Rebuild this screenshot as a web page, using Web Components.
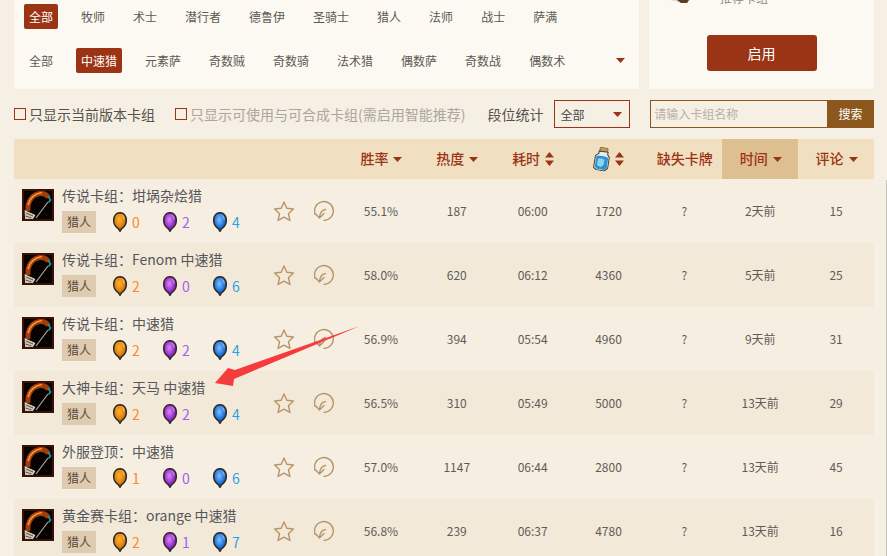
<!DOCTYPE html>
<html lang="zh">
<head>
<meta charset="utf-8">
<title>卡组</title>
<style>
    html, body { margin: 0; height: 556px; overflow: hidden; background: #f6efe3; }
    body { font-family: "Noto Sans CJK SC", "Liberation Sans", sans-serif; position: relative; }
</style>
</head>
<body>
<deck-page></deck-page>

<script>
const CARET = `<svg width="9" height="5" viewBox="0 0 9 5"><path d="M0 0h9L4.5 5z" fill="#9b3415"/></svg>`;
const SORT = `<svg width="9" height="14" viewBox="0 0 9 14"><path d="M4.5 0L9 5.500H0zM0 8.500h9L4.500 14z" fill="#9b3415"/></svg>`;

// Вкладки-фильтры: первая строка классы, вторая архетипы
class FilterTabs extends HTMLElement {
    connectedCallback() {
        const items = this.getAttribute('items').split(',');
        const active = this.getAttribute('active');
        const more = this.hasAttribute('more');
        const root = this.attachShadow({ mode: 'open' });
        root.innerHTML = `
            <style>
                :host { display: flex; align-items: center; height: 25px; position: relative; }
                span {
                    font-size: 12px;
                    line-height: 25px;
                    height: 25px;
                    padding: 0 5px;
                    margin-right: 18px;
                    color: #5c5954;
                    border-radius: 2px;
                    white-space: nowrap;
                }
                span.on { background: #9b3415; color: #fff; }
                svg { margin-left: auto; margin-right: 14px; }
            </style>
            ${items.map(t => `<span class="${t === active ? 'on' : ''}">${t}</span>`).join('')}
            ${more ? CARET : ''}
        `;
    }
}

class TopPanels extends HTMLElement {
    connectedCallback() {
        const root = this.attachShadow({ mode: 'open' });
        root.innerHTML = `
            <style>
                :host { display: flex; gap: 10px; height: 89px; margin: 0 13px 0 14px; }
                .filters {
                    width: 625px;
                    background: #fcf9f2;
                    padding: 4px 0 0 10px;
                    box-sizing: border-box;
                    display: flex;
                    flex-direction: column;
                    gap: 19px;
                }
                .side {
                    flex: 1;
                    background: #fcf9f2;
                    display: flex;
                    flex-direction: column;
                    align-items: center;
                    overflow: hidden;
                }
                .rec { align-self: flex-start; display: flex; height: 35px; font-size: 12px; color: #8d8a84; }
                .rec b { font-weight: 400; margin: -11px 0 0 71px; line-height: 18px; }
                .rec svg { position: absolute; left: 670px; top: 0; }
                button {
                    width: 110px;
                    height: 36px;
                    border: 0;
                    border-radius: 3px;
                    background: #9b3415;
                    color: #fff;
                    font: 14px "Noto Sans CJK SC", sans-serif;
                    padding: 0;
                }
            </style>
            <div class="filters">
                <filter-tabs items="全部,牧师,术士,潜行者,德鲁伊,圣骑士,猎人,法师,战士,萨满" active="全部"></filter-tabs>
                <filter-tabs more items="全部,中速猎,元素萨,奇数贼,奇数骑,法术猎,偶数萨,奇数战,偶数术" active="中速猎"></filter-tabs>
            </div>
            <div class="side">
                <div class="rec">
                    <svg width="20" height="4" viewBox="0 0 20 4"><path d="M0 0h20l-3 3h-5z" fill="#e5dccb"/><path d="M7 0h12l-2 3h-6z" fill="#5b3a24"/></svg>
                    <b>推荐卡组</b>
                </div>
                <button>启用</button>
            </div>
        `;
    }
}

class SearchBar extends HTMLElement {
    connectedCallback() {
        const root = this.attachShadow({ mode: 'open' });
        root.innerHTML = `
            <style>
                :host { display: flex; align-items: center; height: 28px; margin: 11px 13px 11px 14px; font-size: 14px; color: #55524d; }
                .check { display: flex; align-items: center; white-space: nowrap; }
                .check i { width: 10px; height: 10px; border: 1px solid #9b3415; margin-right: 3px; }
                .check.off { color: #aaa6a0; margin-left: 20px; }
                .rank { margin-left: 22px; white-space: nowrap; }
                .select {
                    width: 76px; height: 28px; margin-left: 11px; box-sizing: border-box;
                    border: 1px solid #9b3415; display: flex; align-items: center; justify-content: space-between;
                    padding: 0 7px 0 5px; font-size: 12px; color: #4a4744;
                }
                .search { margin-left: 20px; width: 224px; height: 28px; display: flex; box-sizing: border-box; }
                .search div {
                    flex: 1; border: 1px solid #8b571d; border-right: 0; font-size: 12px; color: #b5b1aa;
                    padding-left: 3px; line-height: 26px;
                }
                .search span { width: 47px; background: #8b571d; color: #fff; font-size: 12px; line-height: 28px; text-align: center; }
            </style>
            <label class="check"><i></i>只显示当前版本卡组</label>
            <label class="check off"><i></i>只显示可使用与可合成卡组(需启用智能推荐)</label>
            <span class="rank">段位统计</span>
            <div class="select">全部 ${CARET}</div>
            <div class="search"><div>请输入卡组名称</div><span>搜索</span></div>
        `;
    }
}

class DeckHead extends HTMLElement {
    connectedCallback() {
        const root = this.attachShadow({ mode: 'open' });
        const bottle = `<svg class="bottle" width="16" height="24" viewBox="0 0 16 24">
            <rect x="4.500" y="0.500" width="8" height="4" rx="1" fill="#c79a55" stroke="#6d5433" stroke-width=".7"/>
            <path d="M4 4.500h9v2.500l2 2.500v11l-3 3H4l-3-2V9.500l3-2.500z" fill="#e3ecee" stroke="#3c3c3a" stroke-width="1"/>
            <path d="M2 10c3-1.500 8-1.500 12 0v10.500l-2 2H4.500L2 20.500z" fill="#2f93cf"/>
            <path d="M4 12.500c2-1 5-1 6.500 0v5l-2.500 2.500-4-1z" fill="#8ad6f2"/>
        </svg>`;
        const col = (label, icon, on) => `<div class="${on ? 'on' : ''}"><span>${label}</span>${icon}</div>`;
        root.innerHTML = `
            <style>
                :host {
                    display: grid;
                    grid-template-columns: 329px repeat(7, 1fr);
                    height: 40px;
                    margin: 0 13px 0 14px;
                    background: #f0e0c1;
                    font-size: 14px;
                    font-weight: 500;
                    color: #9b3415;
                }
                div { display: flex; align-items: center; justify-content: center; gap: 5px; white-space: nowrap; padding-left: 1px; }
                span { display: block; margin-top: -2px; }
                .bottle { display: block; transform: rotate(9deg); margin-top: 2px; }
                .on { background: #debf90; }
            </style>
            <div></div>
            ${col('胜率', CARET)}
            ${col('热度', CARET)}
            ${col('耗时', SORT)}
            ${col(bottle, SORT)}
            ${col('缺失卡牌', '')}
            ${col('时间', CARET, true)}
            ${col('评论', CARET)}
        `;
    }
}

let gemSeq = 0;

// Кристалл редкости: цвет передаём снаружи
function gem(light, mid, dark) {
    const id = 'g' + (gemSeq++);
    return `<svg width="14" height="20" viewBox="0 0 14 20">
        <defs><radialGradient id="${id}" cx="45%" cy="38%" r="65%">
            <stop offset="0" stop-color="${light}"/><stop offset=".6" stop-color="${mid}"/><stop offset="1" stop-color="${dark}"/>
        </radialGradient></defs>
        <path d="M7 .7C3 .7.700 4 .700 8.500c0 3.800 2.800 7 4.800 8.300L7 19.300l1.500-2.500c2-1.300 4.800-4.500 4.800-8.300C13.300 4 11 .7 7 .7z" fill="url(#${id})" stroke="#2e2b26" stroke-width="1.500"/>
        <path d="M8.500 3c1.700.9 2.700 2.600 2.700 4.800" fill="none" stroke="#fff" stroke-opacity=".55" stroke-width="1"/>
    </svg>`;
}

class DeckRow extends HTMLElement {
    connectedCallback() {
        const d = this.dataset;
        const root = this.attachShadow({ mode: 'open' });
        const stats = [d.rate, d.hot, d.time, d.dust, '?', d.ago, d.comments];
        root.innerHTML = `
            <style>
                :host {
                    display: grid;
                    grid-template-columns: 329px repeat(7, 1fr);
                    height: 64px;
                    margin: 0 13px 0 14px;
                    background: ${d.alt ? '#f3e9d8' : '#f6eee0'};
                    font-size: 12px;
                    color: #5f5c58;
                }
                .stat { display: flex; align-items: center; justify-content: center; padding-bottom: 2px; }
                .main { display: flex; padding: 10px 0 0 8px; position: relative; }
                .hero { width: 32px; height: 32px; flex: none; }
                .info { margin-left: 8px; width: 212px; }
                .name { font-size: 14px; line-height: 20px; height: 20px; margin-top: -4px; color: #55565c; white-space: nowrap; }
                .meta { display: flex; align-items: center; margin-top: 6px; height: 22px; }
                .tag { width: 34px; height: 22px; line-height: 22px; text-align: center; background: #decbb0; color: #5a4a38; margin-right: 17px; }
                .cost { display: flex; align-items: center; width: 50px; font-size: 14px; }
                .cost svg { margin-right: 5px; flex: none; }
                .orange { color: #f98a2c; } .purple { color: #a55cf2; } .blue { color: #2f9fe8; }
                .tools { display: flex; gap: 20px; margin-top: 11px; height: 22px; }
            </style>
            <div class="main">
                <svg class="hero" viewBox="0 0 32 32">
                    <rect width="32" height="32" fill="#3a1208"/>
                    <rect x="2" y="2" width="28" height="28" fill="#060302"/>
                    <path d="M6 22C5 12 11 4.500 19 4.500c4 0 6 1.500 7.500 4" fill="none" stroke="#a63c0c" stroke-width="5"/>
                    <path d="M6 16C8 9 13 4.500 20 3.500" fill="none" stroke="#f0a23a" stroke-width="1.500"/>
                    <path d="M26 7l2.500 4-2 2.500" fill="none" stroke="#2f8f90" stroke-width="1.800"/>
                    <path d="M26 13L14 29" stroke="#a8a89a" stroke-width="1.200"/>
                    <path d="M2.500 21l11 5-2.500 4H3z" fill="#cfcab3"/>
                    <path d="M4 24l7 3M3.500 27l6 2" stroke="#5a5040" stroke-width="1"/>
                </svg>
                <div class="info">
                    <div class="name">${d.name}</div>
                    <div class="meta">
                        <span class="tag">猎人</span>
                        <span class="cost orange">${gem('#ffb52e', '#e07f0a', '#8a4504')}${d.o}</span>
                        <span class="cost purple">${gem('#d98bf2', '#9b2cd0', '#54127a')}${d.p}</span>
                        <span class="cost blue">${gem('#7fc2fa', '#1f72dc', '#0c3d8c')}${d.b}</span>
                    </div>
                </div>
                <div class="tools">
                    <svg width="20" height="22" viewBox="0 0 20 22"><path d="M10 2l2.800 6.300 6.700.7-5 4.600 1.400 6.700L10 17.100l-5.900 3.200 1.400-6.700-5-4.600 6.700-.7z" fill="none" stroke="#b8946c" stroke-width="1.400" stroke-linejoin="round"/></svg>
                    <svg width="20" height="22" viewBox="0 0 20 22"><path d="M1.200 14.500A9.400 9.400 0 1 1 10 20.400" fill="none" stroke="#b8946c" stroke-width="1.400" stroke-linecap="round"/><path d="M11.500 9.500C8 10 5.800 13 5.500 18M1.800 14L5.500 18l4.500-4.500" fill="none" stroke="#b8946c" stroke-width="1.400" stroke-linecap="round" stroke-linejoin="round"/></svg>
                </div>
            </div>
            ${stats.map(s => `<div class="stat">${s}</div>`).join('')}
        `;
    }
}

class DeckPage extends HTMLElement {
    connectedCallback() {
        const rows = [
            ['传说卡组：坩埚杂烩猎', 0, 2, 4, '55.1%', 187, '06:00', 1720, '2天前', 15],
            ['传说卡组：Fenom 中速猎', 2, 0, 6, '58.0%', 620, '06:12', 4360, '5天前', 25],
            ['传说卡组：中速猎', 2, 2, 4, '56.9%', 394, '05:54', 4960, '9天前', 31],
            ['大神卡组：天马 中速猎', 2, 2, 4, '56.5%', 310, '05:49', 5000, '13天前', 29],
            ['外服登顶：中速猎', 1, 0, 6, '57.0%', 1147, '06:44', 2800, '13天前', 45],
            ['黄金赛卡组：orange 中速猎', 2, 1, 7, '56.8%', 239, '06:37', 4780, '13天前', 16],
        ];
        const root = this.attachShadow({ mode: 'open' });
        root.innerHTML = `
            <style>
                :host { display: block; position: relative; }
                .arrow { position: absolute; left: 0; top: 0; pointer-events: none; }
            </style>
            <top-panels></top-panels>
            <search-bar></search-bar>
            <deck-head></deck-head>
            ${rows.map((r, i) => `<deck-row ${i % 2 ? 'data-alt="1"' : ''} data-name="${r[0]}" data-o="${r[1]}" data-p="${r[2]}" data-b="${r[3]}"
                data-rate="${r[4]}" data-hot="${r[5]}" data-time="${r[6]}" data-dust="${r[7]}" data-ago="${r[8]}" data-comments="${r[9]}"></deck-row>`).join('')}
            <svg class="arrow" width="887" height="556">
                <path d="M360 326L235 370 228 368 215 383 233 386 234 379z" fill="#f53b3b"/>
                <path d="M886.500 180V556" stroke="#c9c4bb" stroke-width="1"/>
            </svg>
        `;
    }
}

customElements.define('filter-tabs', FilterTabs);
customElements.define('top-panels', TopPanels);
customElements.define('search-bar', SearchBar);
customElements.define('deck-head', DeckHead);
customElements.define('deck-row', DeckRow);
customElements.define('deck-page', DeckPage);
</script>
</body>
</html>
